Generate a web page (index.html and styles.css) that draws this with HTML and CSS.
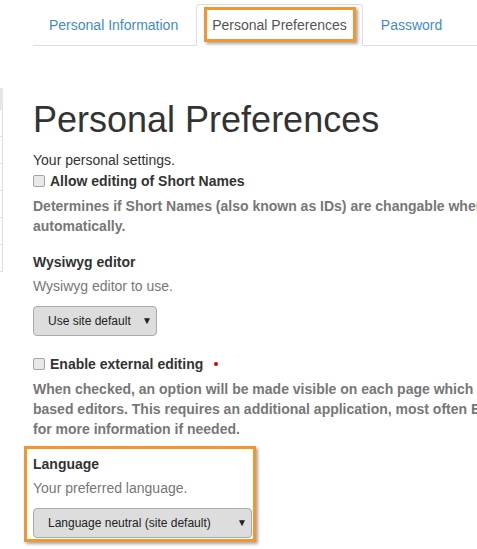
FILE: index.html
```html
<!DOCTYPE html>
<html lang="en">
<head>
<meta charset="utf-8">
<title>Personal Preferences</title>
<link rel="stylesheet" href="styles.css">
</head>
<body>
<div class="page">
  <ul class="tabs">
    <li class="tab"><a href="#">Personal Information</a></li>
    <li class="tab active"><a href="#">Personal Preferences</a></li>
    <li class="tab"><a href="#">Password</a></li>
  </ul>
  <div class="main">
    <div class="sidebar">
      <div class="side-head"></div>
      <div class="side-item"></div>
      <div class="side-item"></div>
      <div class="side-item"></div>
      <div class="side-item"></div>
      <div class="side-item"></div>
      <div class="side-item"></div>
    </div>
    <div class="content">
      <h1 class="title">Personal Preferences</h1>
      <p class="lead">Your personal settings.</p>

      <div class="group group-check1">
        <label class="check-label"><input type="checkbox" class="check">Allow editing of Short Names</label>
        <div class="desc">Determines if Short Names (also known as IDs) are changable when editing items. If Short Names are not displayed, they will be generated<br>automatically.</div>
      </div>

      <div class="group group-editor">
        <div class="field-label">Wysiwyg editor</div>
        <div class="help">Wysiwyg editor to use.</div>
        <div class="select-wrap">
          <select class="select select-editor">
            <option>Use site default</option>
          </select>
        </div>
      </div>

      <div class="group group-check2">
        <label class="check-label"><input type="checkbox" class="check">Enable external editing<span class="required"></span></label>
        <div class="desc">When checked, an option will be made visible on each page which allows you to edit content with your favorite editor instead of using browser-<br>based editors. This requires an additional application, most often ExternalEditor or ZopeEditMe, installed client-side. Ask your administrator<br>for more information if needed.</div>
      </div>

      <div class="group group-lang">
        <div class="field-label">Language</div>
        <div class="help">Your preferred language.</div>
        <div class="select-wrap">
          <select class="select select-lang">
            <option>Language neutral (site default)</option>
          </select>
        </div>
      </div>
    </div>
  </div>
</div>
</body>
</html>
```
FILE: styles.css
```css
html, body {
  margin: 0;
  padding: 0;
  overflow: hidden;
  background: #fff;
}
body {
  font-family: "Liberation Sans", Arial, sans-serif;
  font-size: 14px;
  line-height: 20px;
  color: #333;
}
.page {
  width: 1200px;
}
.tabs {
  list-style: none;
  margin: 4px 0 0 33px;
  padding: 0;
  display: flex;
  border-bottom: 1px solid #ddd;
}
.tab {
  margin-bottom: -1px;
}
.tab a {
  position: relative;
  display: block;
  padding: 10px 15px;
  margin-right: 2px;
  border: 1px solid transparent;
  border-radius: 4px 4px 0 0;
  color: #428bca;
  text-decoration: none;
}
.tab.active a {
  color: #555;
  background: #fff;
  border-color: #ddd #ddd transparent;
}
.tab.active a::after {
  content: "";
  position: absolute;
  left: 7px;
  right: 6px;
  top: 2px;
  bottom: 3px;
  border: 3px solid #f3962f;
  box-shadow: 2px 2px 3px rgba(0, 0, 0, 0.35);
  pointer-events: none;
}
.main {
  display: flex;
  align-items: flex-start;
}
.sidebar {
  width: 3px;
  margin-top: 42px;
  flex: none;
}
.side-head {
  height: 22px;
  background: #e6e6e6;
}
.side-item {
  height: 26px;
  border-right: 1px solid #ddd;
  border-bottom: 1px solid #e3e3e3;
}
.content {
  padding-left: 30px;
  flex: 1;
}
.title {
  font-size: 36px;
  font-weight: normal;
  line-height: 1.1;
  margin: 54px 0 10px;
  color: #333;
}
.lead {
  margin: 0 0 1px;
}
.group {
  position: relative;
  margin-bottom: 15px;
}
.group-check1 {
  margin-bottom: 16px;
}
.group-editor {
  margin-bottom: 18px;
}
.check-label {
  display: inline-block;
  font-weight: bold;
  margin-bottom: 5px;
  color: #333;
}
.check {
  -webkit-appearance: none;
  appearance: none;
  width: 12px;
  height: 12px;
  margin: 0 5px 0 0;
  border: 1px solid #a3a3a3;
  border-radius: 2px;
  background: #e8e8e8;
  vertical-align: -1px;
}
.required {
  display: inline-block;
  width: 4px;
  height: 4px;
  border-radius: 50%;
  background: #d00;
  margin-left: 11px;
  vertical-align: 3px;
}
.desc {
  font-weight: bold;
  color: #777;
  white-space: nowrap;
}
.field-label {
  font-weight: bold;
  margin-bottom: 4px;
}
.help {
  color: #777;
  margin-bottom: 10px;
}
.select-wrap {
  position: relative;
  display: inline-block;
  vertical-align: top;
}
.select-wrap::after {
  content: "\25BC";
  position: absolute;
  right: 5px;
  top: 10px;
  font-size: 10px;
  line-height: 10px;
  color: #222;
  pointer-events: none;
}
.select {
  -webkit-appearance: none;
  appearance: none;
  display: block;
  height: 30px;
  margin: 0;
  padding: 0 20px 0 14px;
  font-family: "Liberation Sans", Arial, sans-serif;
  font-size: 12px;
  color: #222;
  background: #ddd;
  border: 1px solid #aaa;
  border-radius: 4px;
}
.select-editor {
  width: 124px;
}
.select-lang {
  width: 219px;
}
.group-lang::before {
  content: "";
  position: absolute;
  left: -9px;
  top: -8px;
  width: 226px;
  height: 90px;
  border: 3px solid #f3962f;
  box-shadow: 2px 2px 3px rgba(0, 0, 0, 0.35);
  pointer-events: none;
}
```
